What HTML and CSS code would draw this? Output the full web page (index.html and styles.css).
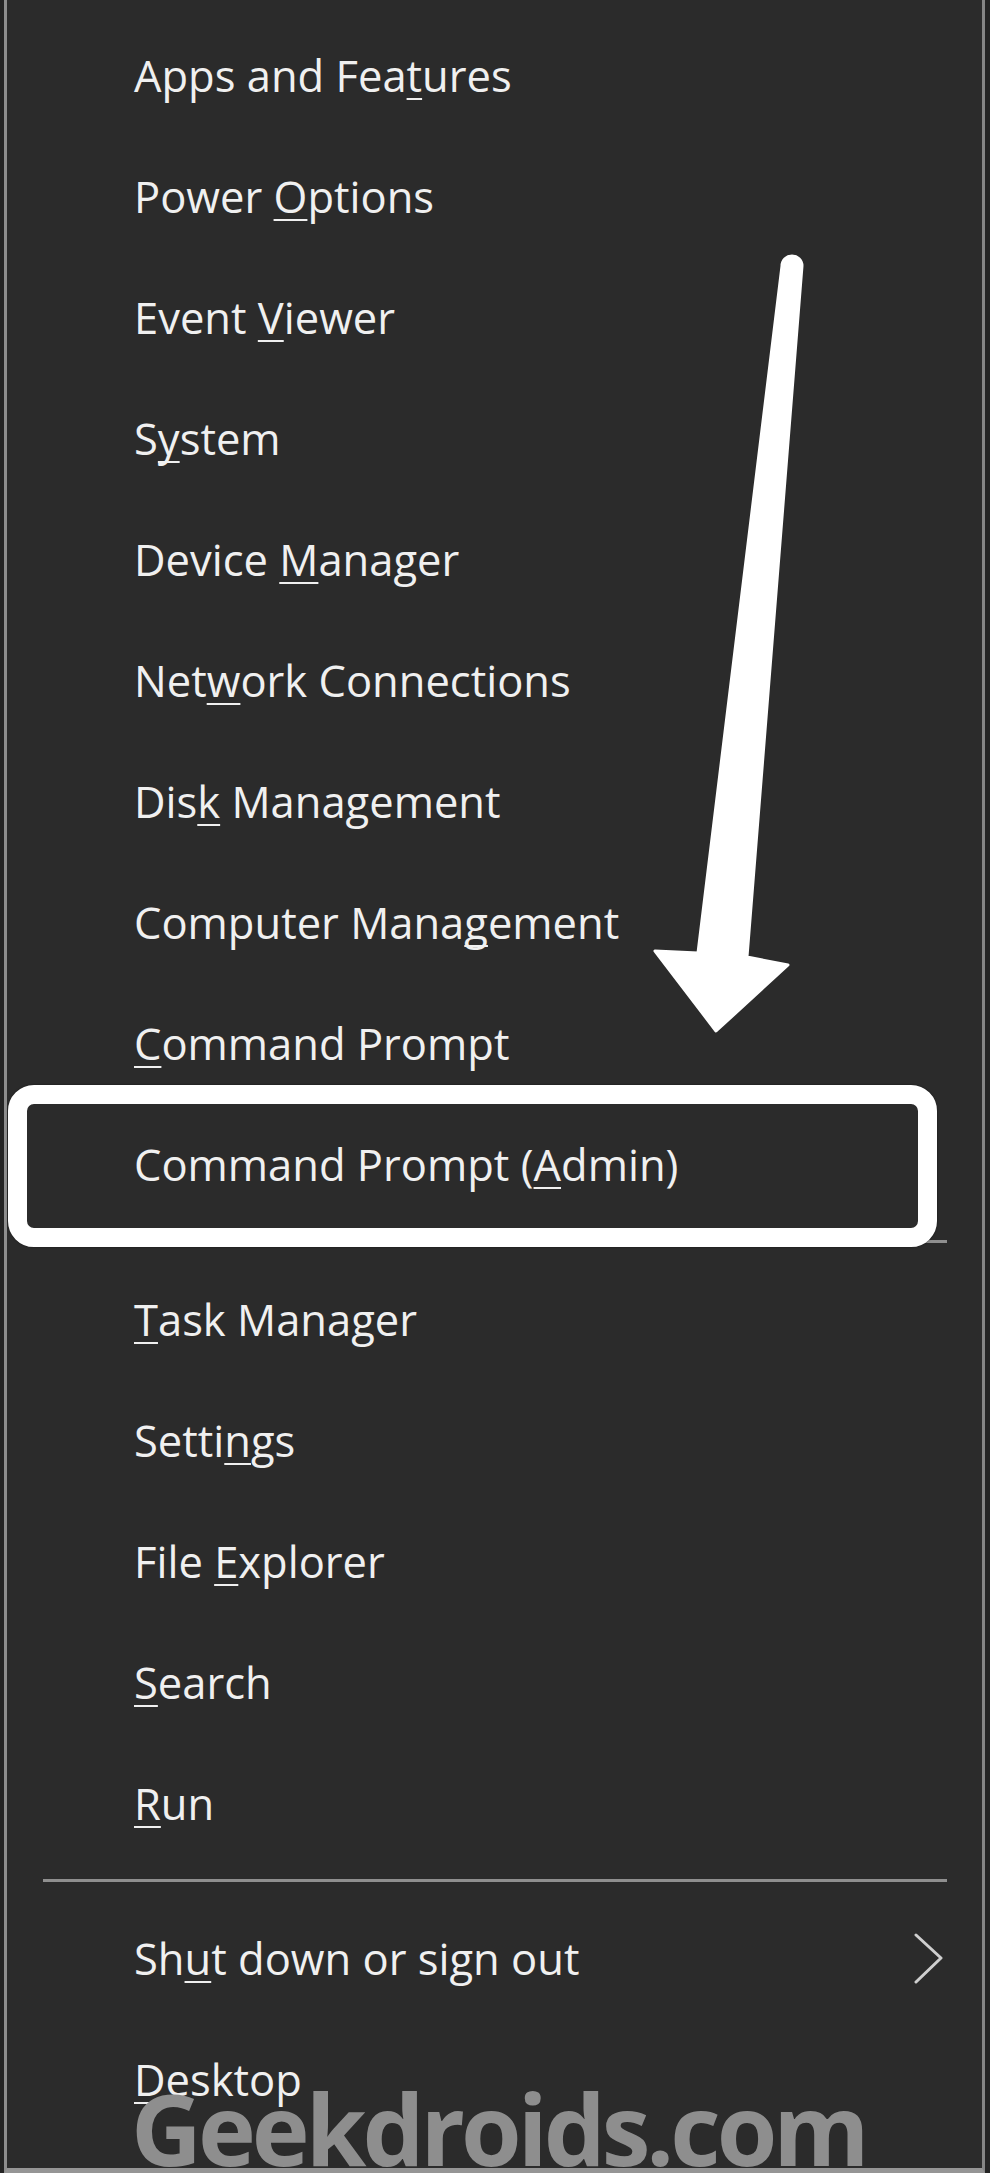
FILE: index.html
```html
<!DOCTYPE html>
<html lang="en">
<head>
<meta charset="utf-8">
<title>Win+X menu</title>
<link rel="stylesheet" href="styles.css">
</head>
<body>
<div class="menu">
  <ul class="group">
    <li class="item">Apps and Fea<u>t</u>ures</li>
    <li class="item">Power <u>O</u>ptions</li>
    <li class="item">Event <u>V</u>iewer</li>
    <li class="item">S<u>y</u>stem</li>
    <li class="item">Device <u>M</u>anager</li>
    <li class="item">Net<u>w</u>ork Connections</li>
    <li class="item">Dis<u>k</u> Management</li>
    <li class="item">Computer Mana<u>g</u>ement</li>
    <li class="item"><u>C</u>ommand Prompt</li>
    <li class="item item-highlight">Command Prompt (<u>A</u>dmin)</li>
  </ul>
  <div class="sep"></div>
  <ul class="group">
    <li class="item"><u>T</u>ask Manager</li>
    <li class="item">Setti<u>n</u>gs</li>
    <li class="item">File <u>E</u>xplorer</li>
    <li class="item"><u>S</u>earch</li>
    <li class="item"><u>R</u>un</li>
  </ul>
  <div class="sep"></div>
  <ul class="group">
    <li class="item item-sub">
      <span>Sh<u>u</u>t down or sign out</span>
      <svg class="chevron" viewBox="0 0 30 52" width="30" height="52" aria-hidden="true">
        <polyline points="3,2 28,25 3,49" fill="none" stroke="#cfcfcf" stroke-width="3" stroke-linecap="round" stroke-linejoin="round"/>
      </svg>
    </li>
    <li class="item"><u>D</u>esktop</li>
  </ul>
</div>

<svg class="arrow" viewBox="0 0 990 2173" width="990" height="2173" aria-hidden="true">
  <path d="M782,266 A10,10 0 0 1 802,266 L747,957 L788,965 L716,1031 L655,951 L698,953 Z"
        fill="#ffffff" stroke="#ffffff" stroke-width="3" stroke-linejoin="round"/>
</svg>

<div class="watermark">Geekdroids.com</div>
</body>
</html>
```

FILE: styles.css
```css
html, body {
  margin: 0;
  padding: 0;
}

body {
  position: relative;
  width: 990px;
  height: 2173px;
  overflow: hidden;
  background: #242424;
  font-family: "Open Sans", "Noto Sans", "Liberation Sans", sans-serif;
  color: #f0f0f0;
}

.menu {
  box-sizing: border-box;
  margin-left: 4px;
  width: 981px;
  height: 2173px;
  padding-top: 15px;
  background: #2b2b2b;
  border-left: 3px solid #8d8d8d;
  border-right: 3px solid #858585;
  border-bottom: 5px solid #959595;
}

.group {
  list-style: none;
  margin: 0;
  padding: 0;
}

.item {
  position: relative;
  height: 121px;
  line-height: 121px;
  padding-left: 127px;
  font-size: 43.5px;
  white-space: nowrap;
}

.item u {
  text-decoration: underline;
  text-decoration-thickness: 2px;
  text-underline-offset: 6px;
  text-decoration-skip-ink: none;
}

.item-highlight::before {
  content: "";
  position: absolute;
  top: -19px;
  bottom: -22px;
  left: 1px;
  right: 45px;
  border: 19px solid #ffffff;
  border-radius: 26px;
  box-shadow: 0 0 2px rgba(0, 0, 0, 0.6);
}

.item-sub {
  display: flex;
  align-items: center;
  justify-content: space-between;
  padding-right: 39px;
}

.chevron {
  display: block;
  flex: none;
}

.sep {
  height: 3px;
  margin: 15px 35px 16px 36px;
  background: #8f8f8f;
}

.arrow {
  position: absolute;
  top: 0;
  left: 0;
  pointer-events: none;
}

.watermark {
  position: absolute;
  left: 131px;
  top: 2087px;
  font-family: "Open Sans", "Noto Sans", sans-serif;
  font-weight: 700;
  font-size: 98px;
  line-height: 0.85;
  letter-spacing: -4px;
  color: #8e8e8e;
  white-space: nowrap;
}
```
